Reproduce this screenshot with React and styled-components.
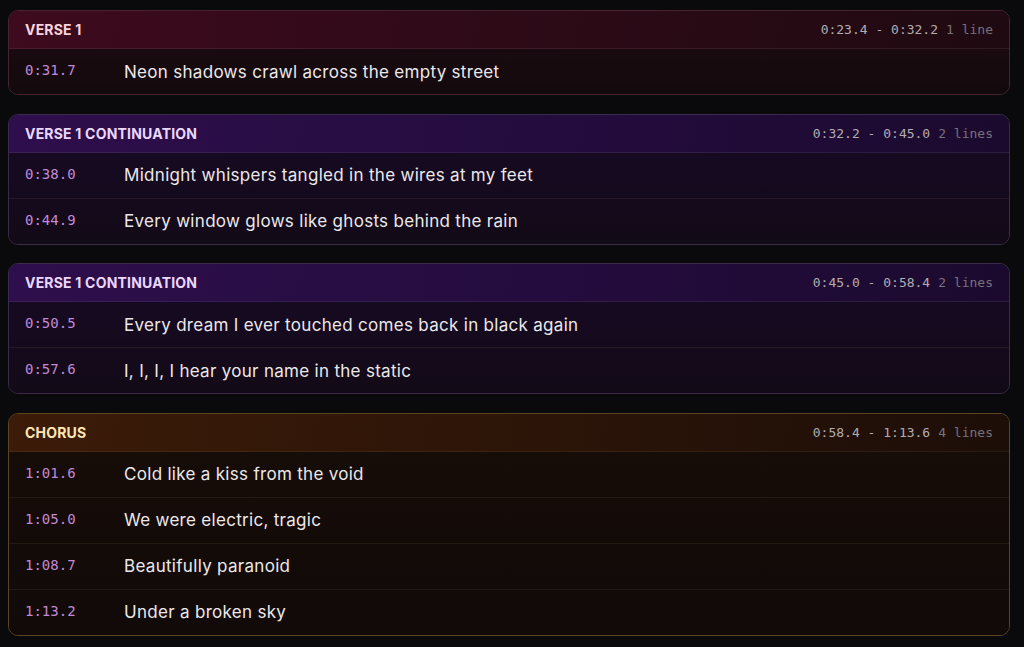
import styled, { createGlobalStyle } from "styled-components";

const sections = [
  {
    tone: "verse",
    label: "Verse 1",
    range: "0:23.4 - 0:32.2",
    lines: [{ time: "0:31.7", text: "Neon shadows crawl across the empty street" }],
  },
  {
    tone: "cont",
    label: "Verse 1 Continuation",
    range: "0:32.2 - 0:45.0",
    lines: [
      { time: "0:38.0", text: "Midnight whispers tangled in the wires at my feet" },
      { time: "0:44.9", text: "Every window glows like ghosts behind the rain" },
    ],
  },
  {
    tone: "cont",
    label: "Verse 1 Continuation",
    range: "0:45.0 - 0:58.4",
    lines: [
      { time: "0:50.5", text: "Every dream I ever touched comes back in black again" },
      { time: "0:57.6", text: "I, I, I, I hear your name in the static" },
    ],
  },
  {
    tone: "chorus",
    label: "Chorus",
    range: "0:58.4 - 1:13.6",
    lines: [
      { time: "1:01.6", text: "Cold like a kiss from the void" },
      { time: "1:05.0", text: "We were electric, tragic" },
      { time: "1:08.7", text: "Beautifully paranoid" },
      { time: "1:13.2", text: "Under a broken sky" },
    ],
  },
];

const tones = {
  verse: {
    border: "#45242f",
    head: "linear-gradient(100deg, #3e0a1e 0%, #2c0a16 55%, #1f0a11 100%)",
    body: "linear-gradient(180deg, #190a10 0%, #130a0d 100%)",
    label: "#f8d3de",
    rule: "rgba(255,255,255,0.07)",
  },
  cont: {
    border: "#3a2a4c",
    head: "linear-gradient(100deg, #2e0e4c 0%, #240c3e 55%, #1b0a2e 100%)",
    body: "linear-gradient(180deg, #160a22 0%, #130a17 100%)",
    label: "#ecd8ff",
    rule: "rgba(255,255,255,0.07)",
  },
  chorus: {
    border: "#5a4422",
    head: "linear-gradient(100deg, #3c1b08 0%, #2b1408 55%, #1c0e08 100%)",
    body: "linear-gradient(180deg, #160c08 0%, #110a08 100%)",
    label: "#fde7b4",
    rule: "rgba(255,220,160,0.07)",
  },
};

const GlobalStyle = createGlobalStyle`
  html, body {
    margin: 0;
    background: #0a0a0c;
  }
  body {
    font-family: Inter, "Noto Sans", sans-serif;
  }
`;

function App() {
  return (
    <>
      <GlobalStyle />
      <Page>
        {sections.map((section, i) => (
          <Section key={i} $tone={section.tone}>
            <Header $tone={section.tone}>
              <Label $tone={section.tone}>{section.label}</Label>
              <Meta>
                <Range>{section.range}</Range>
                <Count>
                  {section.lines.length} {section.lines.length === 1 ? "line" : "lines"}
                </Count>
              </Meta>
            </Header>
            <Body $tone={section.tone}>
              {section.lines.map((line) => (
                <Line key={line.time} $tone={section.tone}>
                  <Time>{line.time}</Time>
                  <Lyric>{line.text}</Lyric>
                </Line>
              ))}
            </Body>
          </Section>
        ))}
      </Page>
    </>
  );
}

const Page = styled.div`
  display: flex;
  flex-direction: column;
  gap: 18.5px;
  padding: 10px 14px 10px 8px;
`;

const Section = styled.section`
  border: 1px solid ${(p) => tones[p.$tone].border};
  border-radius: 10px;
  overflow: hidden;
`;

const Header = styled.div`
  display: flex;
  align-items: center;
  justify-content: space-between;
  height: 37px;
  padding: 0 16px;
  background: ${(p) => tones[p.$tone].head};
  border-bottom: 1px solid ${(p) => tones[p.$tone].rule};
`;

const Label = styled.div`
  font-size: 14px;
  font-weight: 700;
  letter-spacing: 0.2px;
  text-transform: uppercase;
  color: ${(p) => tones[p.$tone].label};
`;

const Meta = styled.div`
  display: flex;
  gap: 8px;
  font-family: "DejaVu Sans Mono", monospace;
  font-size: 13px;
`;

const Range = styled.span`
  color: #b3adb1;
`;

const Count = styled.span`
  color: #77717a;
`;

const Body = styled.div`
  background: ${(p) => tones[p.$tone].body};
`;

const Line = styled.div`
  display: flex;
  align-items: center;
  height: 45px;
  padding: 0 16px;
  & + & {
    border-top: 1px solid ${(p) => tones[p.$tone].rule};
  }
`;

const Time = styled.span`
  width: 99px;
  flex-shrink: 0;
  margin-top: -3px;
  font-family: "DejaVu Sans Mono", monospace;
  font-size: 14px;
  color: #c389d6;
`;

const Lyric = styled.span`
  font-size: 17px;
  letter-spacing: 0.3px;
  color: #ece8ea;
`;

export default App;
